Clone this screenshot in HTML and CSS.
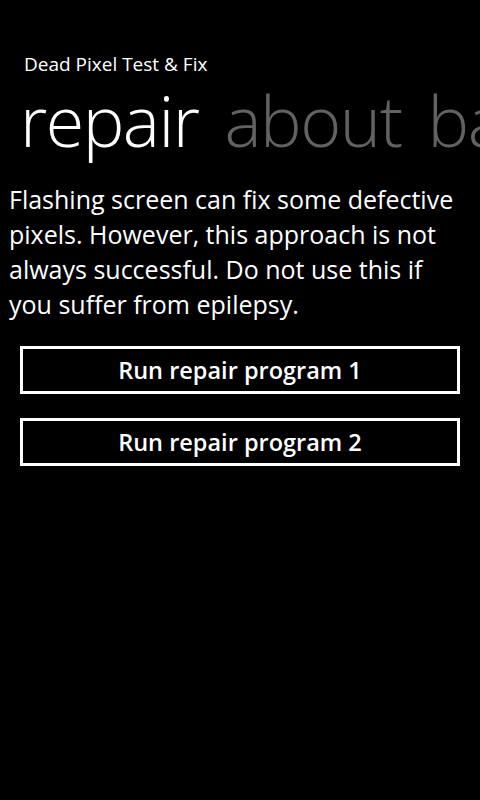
FILE: index.html
```html
<!DOCTYPE html>
<html>
<head>
<meta charset="utf-8">
<link rel="stylesheet" href="styles.css">
</head>
<body>
<div class="page">
  <div class="app-title">Dead Pixel Test &amp; Fix</div>
  <div class="pivot-headers"><span class="pivot-item active">repair</span><span class="pivot-item">about</span><span class="pivot-item">basic</span></div>
  <div class="content">
    <p class="desc">Flashing screen can fix some defective pixels. However, this approach is not always successful. Do not use this if you suffer from epilepsy.</p>
    <div class="buttons">
      <button class="btn">Run repair program 1</button>
      <button class="btn">Run repair program 2</button>
    </div>
  </div>
</div>
</body>
</html>
```

FILE: styles.css
```css
html, body {
  margin: 0;
  padding: 0;
  background: #000;
  color: #fff;
  font-family: "Open Sans", "Noto Sans", sans-serif;
}
.page {
  width: 480px;
  height: 800px;
  overflow: hidden;
}
.app-title {
  padding: 51px 0 0 24px;
  font-size: 19px;
  line-height: 26px;
}
.pivot-headers {
  white-space: nowrap;
  overflow: hidden;
  padding-left: 20px;
  font-size: 70px;
  font-weight: 300;
  letter-spacing: -1.5px;
  line-height: 86px;
}
.pivot-item {
  color: #626262;
  margin-right: 26px;
}
.pivot-item.active {
  color: #fff;
}
.content {
  padding: 0 18px 0 8px;
}
.desc {
  margin: 19px 0 0 1px;
  font-size: 25px;
  line-height: 35px;
}
.buttons {
  display: flex;
  flex-direction: column;
  gap: 24px;
  padding: 24px 2px 0 12px;
}
.btn {
  height: 48px;
  background: #000;
  color: #fff;
  border: 3px solid #fff;
  font-family: inherit;
  font-size: 23.5px;
  font-weight: 600;
  padding: 0;
}
```
